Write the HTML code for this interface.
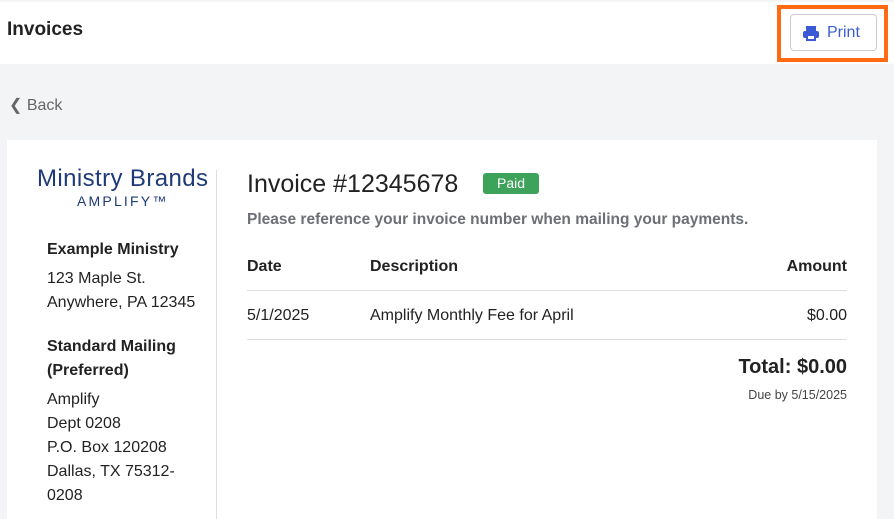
<!DOCTYPE html>
<html><head><style>
*{box-sizing:border-box;margin:0;padding:0}
body{width:894px;height:519px;overflow:hidden;background:#f3f4f6;font-family:"Liberation Sans",sans-serif;color:#212529;position:relative}
.hdr{position:absolute;left:0;top:2px;width:894px;height:62px;background:#fff}
.title{position:absolute;left:7px;top:19px;font-size:19px;color:#222;font-weight:bold;-webkit-text-stroke:0}
.orange{position:absolute;left:777px;top:5px;width:111px;height:57px;border:4px solid #ff6a13}
.btn{position:absolute;left:790px;top:14px;width:87px;height:37px;border:1px solid #ccc;border-radius:4px;background:#fff;color:#3b5bd6;font-size:16px;padding:9px 0 0 36px}
.back{position:absolute;left:9px;top:95px;font-size:16px;color:#666}
.card{position:absolute;left:7px;top:140px;width:870px;height:379px;background:#fff}
.vl{position:absolute;left:216px;top:170px;width:1px;height:349px;background:#ddd}
.logo1{position:absolute;left:37px;top:165px;font-size:24px;color:#1f3a7a;letter-spacing:.4px}
.logo2{position:absolute;left:77px;top:193px;font-size:14px;color:#1f3a7a;letter-spacing:2.2px}
.l{position:absolute;left:47px;font-size:16px;line-height:24px;color:#222}
.b{font-weight:bold}
.inv{position:absolute;left:247px;top:170px;font-size:25px;color:#222}
.paid{position:absolute;left:483px;top:173px;width:56px;height:21px;background:#3da35a;color:#fff;border-radius:3px;font-size:14px;text-align:center;line-height:21px}
.ref{position:absolute;left:247px;top:211px;font-size:15.5px;color:#6c6f75;font-weight:bold}
.t{position:absolute;font-size:16px;color:#222}
.hr{position:absolute;left:247px;width:600px;height:1px;background:#ddd}
</style></head><body>
<div class="hdr"></div>
<div class="title">Invoices</div>
<div class="orange"></div>
<div class="btn"><svg style="position:absolute;left:12px;top:11px" width="16" height="15" viewBox="0 0 16 15"><rect x="3" y="0" width="10" height="5" fill="#3b5bd6"/><rect x="0" y="5" width="16" height="7" rx="2" fill="#3b5bd6"/><rect x="3" y="9" width="10" height="6" fill="#3b5bd6"/><rect x="5" y="10" width="6" height="3" fill="#fff"/></svg>Print</div>
<div class="back">&#10094; Back</div>
<div class="card"></div>
<div class="vl"></div>
<div class="logo1">Ministry Brands</div>
<div class="logo2">AMPLIFY™</div>
<div class="l b" style="top:238px">Example Ministry</div>
<div class="l" style="top:267px">123 Maple St.<br>Anywhere, PA 12345</div>
<div class="l b" style="top:335px">Standard Mailing<br>(Preferred)</div>
<div class="l" style="top:388px">Amplify<br>Dept 0208<br>P.O. Box 120208<br>Dallas, TX 75312-<br>0208</div>
<div class="inv">Invoice #12345678</div>
<div class="paid">Paid</div>
<div class="ref">Please reference your invoice number when mailing your payments.</div>
<div class="t b" style="left:247px;top:258px">Date</div>
<div class="t b" style="left:370px;top:258px">Description</div>
<div class="t b" style="right:47px;top:258px">Amount</div>
<div class="hr" style="top:290px"></div>
<div class="t" style="left:247px;top:307px">5/1/2025</div>
<div class="t" style="left:370px;top:307px">Amplify Monthly Fee for April</div>
<div class="t" style="right:47px;top:307px">$0.00</div>
<div class="hr" style="top:339px"></div>
<div class="t b" style="right:47px;top:356px;font-size:20px">Total: $0.00</div>
<div class="t" style="right:47px;top:388px;font-size:12.5px;color:#444">Due by 5/15/2025</div>
</body></html>
